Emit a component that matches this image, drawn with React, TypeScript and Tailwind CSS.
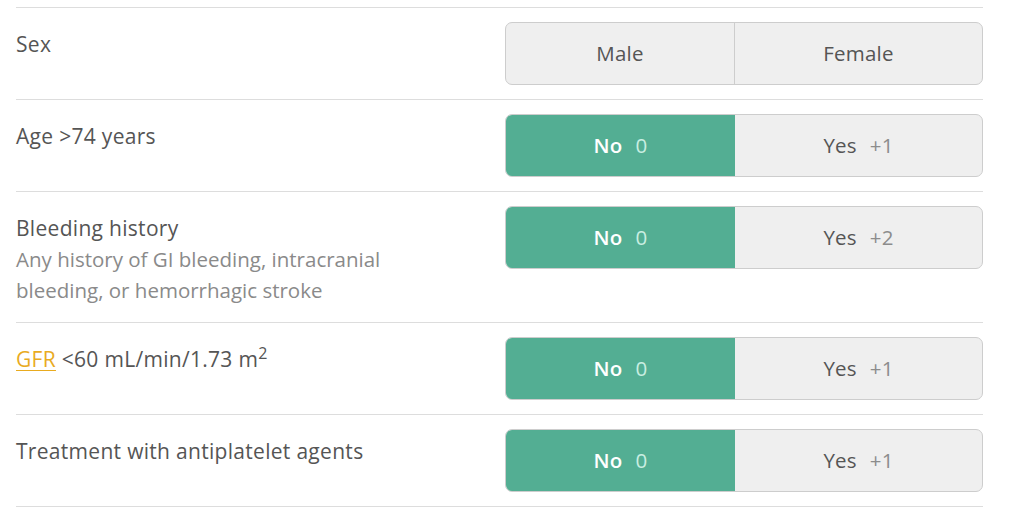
import type { ReactNode } from "react";

type Option = { label: string; points?: string };

type Row = {
  label: ReactNode;
  hint?: string;
  options: [Option, Option];
  selected: number | null;
};

const rows: Row[] = [
  { label: "Sex", options: [{ label: "Male" }, { label: "Female" }], selected: null },
  {
    label: "Age >74 years",
    options: [
      { label: "No", points: "0" },
      { label: "Yes", points: "+1" },
    ],
    selected: 0,
  },
  {
    label: "Bleeding history",
    hint: "Any history of GI bleeding, intracranial bleeding, or hemorrhagic stroke",
    options: [
      { label: "No", points: "0" },
      { label: "Yes", points: "+2" },
    ],
    selected: 0,
  },
  {
    label: (
      <>
        <a className="text-[#e9ab1f] underline decoration-1 underline-offset-[3px]">GFR</a> &lt;60 mL/min/1.73 m
        <sup className="text-[16px]">2</sup>
      </>
    ),
    options: [
      { label: "No", points: "0" },
      { label: "Yes", points: "+1" },
    ],
    selected: 0,
  },
  {
    label: "Treatment with antiplatelet agents",
    options: [
      { label: "No", points: "0" },
      { label: "Yes", points: "+1" },
    ],
    selected: 0,
  },
];

function Toggle({ options, selected }: { options: [Option, Option]; selected: number | null }) {
  return (
    <div className="flex h-[63px] w-[478px] shrink-0 overflow-hidden rounded-[7px] border border-[#cdcdcd] bg-[#efefef]">
      {options.map((o, i) => {
        const on = selected === i;
        return (
          <button
            key={i}
            type="button"
            className={`flex items-center justify-center gap-[13px] text-[20.5px] tracking-[0.2px] ${
              i === 0 ? "w-[229px]" : "flex-1"
            } ${i === 0 && selected === null ? "border-r border-[#cdcdcd]" : ""} ${
              on ? "bg-[#53ae93] font-semibold text-white" : "text-[#555555]"
            }`}
          >
            <span>{o.label}</span>
            {o.points && (
              <span className={on ? "font-normal text-[#c9eee2]" : "text-[#8c8c8c]"}>{o.points}</span>
            )}
          </button>
        );
      })}
    </div>
  );
}

export default function App() {
  return (
    <div
      className="min-h-[532px] bg-white pl-4 pt-[7px]"
      style={{ fontFamily: '"Open Sans", "Noto Sans", sans-serif' }}
    >
      <div className="w-[967px] border-b border-[#dddddd]">
        {rows.map((r, i) => (
          <div key={i} className="flex justify-between border-t border-[#dddddd] pb-[14px] pt-[14px]">
            <div className="w-[400px] pb-[2px] pt-[7px] text-[21px] leading-[31px] tracking-[0.3px] text-[#555555]">
              <div>{r.label}</div>
              {r.hint && <div className="text-[20.5px] tracking-normal text-[#8a8a8a]">{r.hint}</div>}
            </div>
            <Toggle options={r.options} selected={r.selected} />
          </div>
        ))}
      </div>
    </div>
  );
}
